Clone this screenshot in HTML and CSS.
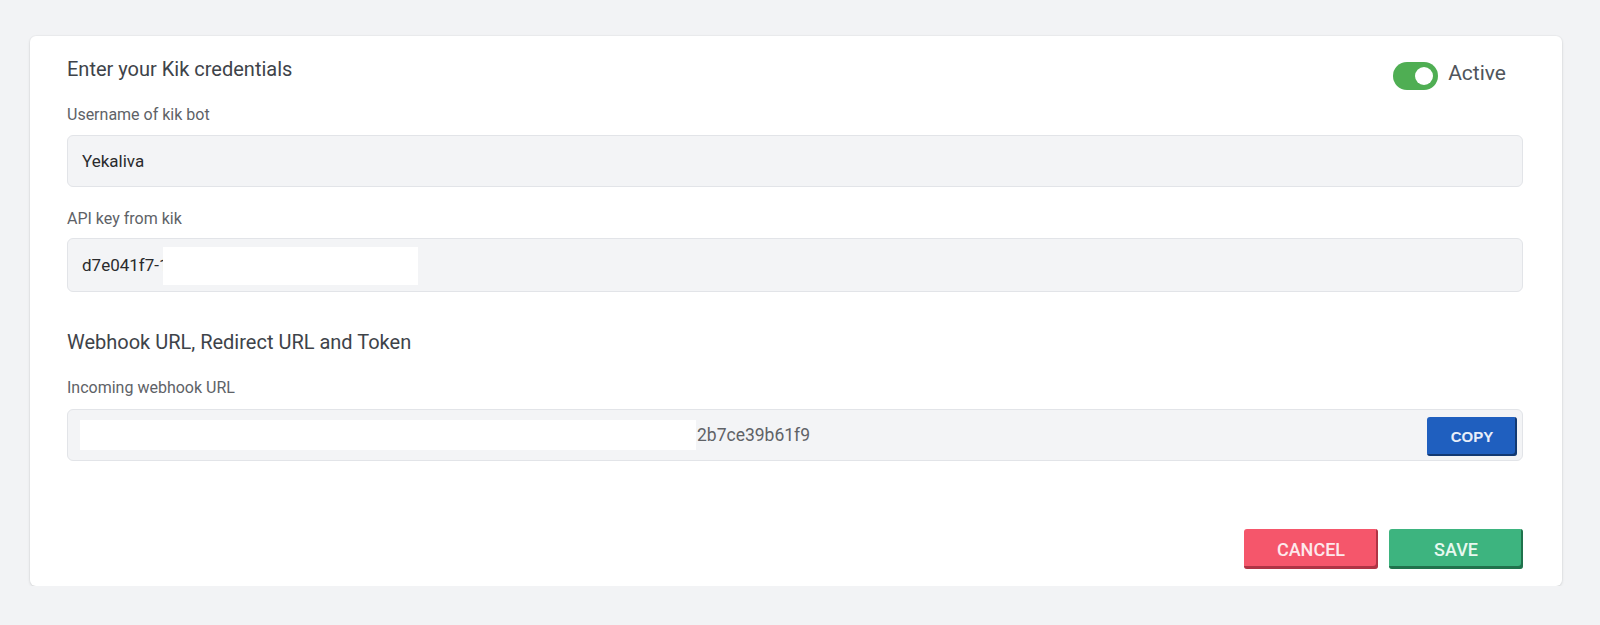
FILE: index.html
```html
<!DOCTYPE html>
<html lang="en">
<head>
<meta charset="utf-8">
<title>Kik credentials</title>
<link rel="stylesheet" href="styles.css">
</head>
<body>
<div class="page">
  <div class="card">
    <div class="header">
      <h2 class="title">Enter your Kik credentials</h2>
      <div class="status">
        <span class="toggle"><span class="knob"></span></span>
        <span class="status-text">Active</span>
      </div>
    </div>

    <label class="label label-first">Username of kik bot</label>
    <div class="input">Yekaliva</div>

    <label class="label label-second">API key from kik</label>
    <div class="input input-tall">d7e041f7-1<span class="redact redact-key"></span></div>

    <h2 class="title title-second">Webhook URL, Redirect URL and Token</h2>

    <label class="label label-third">Incoming webhook URL</label>
    <div class="input input-url">
      <span class="redact redact-url"></span><span class="url-text">2b7ce39b61f9</span>
      <button class="copy">COPY</button>
    </div>

    <div class="actions">
      <button class="btn btn-cancel">CANCEL</button>
      <button class="btn btn-save">SAVE</button>
    </div>
  </div>
</div>
</body>
</html>
```

FILE: styles.css
```css
html, body {
  margin: 0;
  padding: 0;
}

body {
  background: #f2f3f5;
  font-family: Roboto, "Liberation Sans", Arial, sans-serif;
  color: #333;
}

.page {
  padding: 36px 38px 0 30px;
}

.card {
  background: #ffffff;
  border-radius: 6px;
  box-shadow: 0 1px 3px rgba(0, 0, 0, 0.12), 0 0 0 1px rgba(0, 0, 0, 0.02);
  padding: 21px 39px 17px 37px;
}

.header {
  display: flex;
  justify-content: space-between;
  align-items: flex-start;
  padding-right: 17px;
}

.title {
  margin: 0;
  font-size: 20px;
  line-height: 24px;
  font-weight: 400;
  color: #3e4349;
}

.status {
  display: flex;
  align-items: flex-start;
  gap: 10px;
}

.toggle {
  margin-top: 5px;
  width: 45px;
  height: 28px;
  box-sizing: border-box;
  border-radius: 14px;
  background: #4fae53;
  display: flex;
  align-items: center;
  justify-content: flex-end;
  padding: 0 5px;
}

.knob {
  width: 18px;
  height: 18px;
  border-radius: 50%;
  background: #ffffff;
}

.status-text {
  margin-top: 4px;
  font-size: 21px;
  line-height: 24px;
  color: #50555b;
}

.label {
  display: block;
  font-size: 16px;
  line-height: 20px;
  color: #5e6267;
  margin-bottom: 10px;
}

.label-first {
  margin-top: 15px;
}

.label-second {
  margin-top: 22px;
  margin-bottom: 9px;
}

.label-third {
  margin-top: 24px;
  margin-bottom: 11px;
}

.title-second {
  margin-top: 38px;
}

.input {
  height: 52px;
  box-sizing: border-box;
  border: 1px solid #e2e4e8;
  border-radius: 6px;
  background: #f3f4f6;
  display: flex;
  align-items: center;
  padding: 0 5px 0 14px;
  font-size: 17px;
  color: #2a2b2d;
}

.input-tall {
  height: 54px;
}

.redact {
  display: inline-block;
  background: #ffffff;
}

.redact-key {
  width: 255px;
  height: 38px;
  margin-left: -6px;
  margin-top: 2px;
}

.redact-url {
  width: 616px;
  height: 30px;
  margin-left: -2px;
}

.url-text {
  font-size: 17.5px;
  color: #5f6266;
  margin-left: 1px;
  flex: 1;
}

.copy {
  width: 90px;
  height: 39px;
  border: none;
  border-radius: 3px;
  background: #1f5fbf;
  box-shadow: inset -2px -2px 0 rgba(0, 0, 0, 0.4);
  color: #e8eef9;
  font-family: "Liberation Sans", Arial, sans-serif;
  font-weight: 700;
  font-size: 15px;
  padding: 0;
  margin-top: 3px;
}

.actions {
  display: flex;
  justify-content: flex-end;
  gap: 11px;
  margin-top: 68px;
}

.btn {
  width: 134px;
  height: 40px;
  border: none;
  border-radius: 3px;
  font-family: Roboto, "Liberation Sans", Arial, sans-serif;
  font-size: 18px;
  font-weight: 500;
  padding: 0;
}

.btn-cancel {
  background: #f5566b;
  color: #fde9ec;
  box-shadow: inset -2px -3px 0 rgba(90, 10, 25, 0.45);
}

.btn-save {
  background: #3db47f;
  color: #e8f8ef;
  box-shadow: inset -2px -3px 0 rgba(10, 60, 35, 0.55);
}
```
